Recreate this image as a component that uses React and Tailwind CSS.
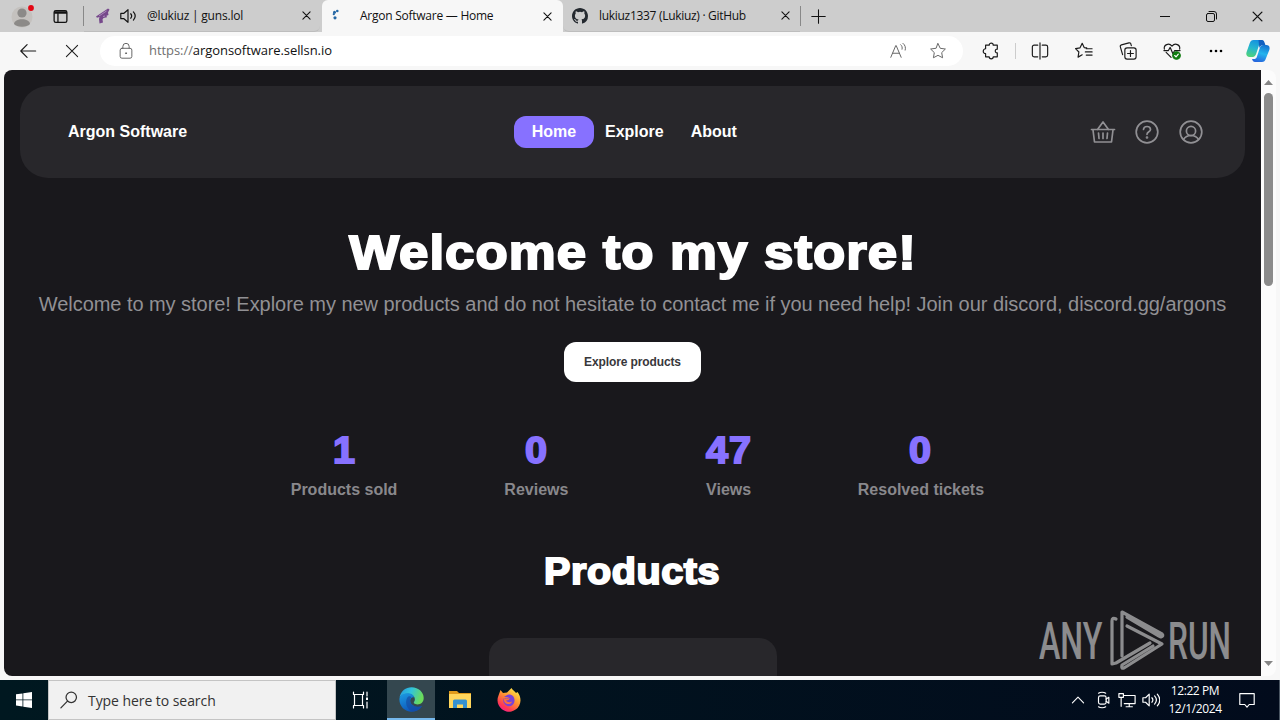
import React from 'react';

const tabs = [
  { title: '@lukiuz | guns.lol', icon: 'gun' },
  { title: 'Argon Software — Home', icon: 'argon', active: true },
  { title: 'lukiuz1337 (Lukiuz) · GitHub', icon: 'github' },
];

const stats = [
  { value: '1', label: 'Products sold' },
  { value: '0', label: 'Reviews' },
  { value: '47', label: 'Views' },
  { value: '0', label: 'Resolved tickets' },
];

function Icon({ size = 18, box = 20, sw = 1.1, className = '', children }) {
  return (
    <svg width={size} height={size} viewBox={`0 0 ${box} ${box}`} fill="none" stroke="currentColor" strokeWidth={sw} strokeLinecap="round" strokeLinejoin="round" className={`shrink-0 ${className}`}>
      {children}
    </svg>
  );
}

function Cross({ size = 9 }) {
  return <Icon size={size} box={10} sw={1.2}><path d="M1 1l8 8M9 1L1 9" /></Icon>;
}

function TabIcon({ icon }) {
  if (icon === 'gun') {
    return (
      <svg width="16" height="16" viewBox="0 0 16 16" className="shrink-0">
        <path d="M1 8.500L13 .5l1.500 1-1.500 3 .5 2.500-2 .8.500 1.500-3.500.7-1 1.500.5 3-3.500 1-.5-4.500L4.500 9 2 9.800z" fill="#76488b" />
        <path d="M4 8l7.500-5M8 8.500l2-.5" stroke="#b79cc4" strokeWidth="0.800" />
      </svg>
    );
  }
  if (icon === 'github') {
    return (
      <svg width="16" height="16" viewBox="0 0 16 16" fill="#24292f" className="shrink-0">
        <path d="M8 0C3.580 0 0 3.580 0 8c0 3.540 2.290 6.530 5.470 7.590.4.070.550-.170.550-.380 0-.190-.010-.820-.010-1.490-2.010.370-2.530-.490-2.690-.940-.090-.230-.480-.940-.820-1.130-.280-.150-.680-.520-.010-.530.630-.010 1.080.580 1.230.820.720 1.210 1.870.870 2.330.660.070-.520.280-.870.510-1.070-1.780-.2-3.640-.890-3.640-3.950 0-.870.310-1.590.820-2.150-.080-.2-.360-1.020.080-2.120 0 0 .670-.210 2.200.820a7.420 7.420 0 0 1 4 0c1.530-1.040 2.200-.820 2.200-.820.440 1.100.160 1.920.080 2.120.510.560.820 1.270.820 2.150 0 3.070-1.870 3.750-3.650 3.950.290.250.540.730.540 1.480 0 1.070-.010 1.930-.010 2.200 0 .210.150.460.550.380A8.010 8.010 0 0 0 16 8c0-4.420-3.580-8-8-8z" />
      </svg>
    );
  }
  return (
    <svg width="16" height="16" viewBox="0 0 16 16" fill="#2467a5" className="shrink-0">
      <circle cx="8.300" cy="3" r="1.300" />
      <circle cx="5.500" cy="4.300" r="1.500" />
      <circle cx="4.800" cy="6.200" r="1.100" />
      <circle cx="6" cy="9.800" r="1.600" />
    </svg>
  );
}

function Tab({ tab }) {
  if (tab.active) {
    return (
      <div className="w-[241px] h-8 flex items-center rounded-t-md bg-[#f7f7f7] pl-[7px] pr-[11px]">
        <TabIcon icon={tab.icon} />
        <span className="flex-1 pl-[15px] tracking-[-0.250px] whitespace-nowrap">{tab.title}</span>
        <Cross />
      </div>
    );
  }
  const first = tab.icon === 'gun';
  return (
    <div className={`h-8 flex items-center border-b border-[#bdbdbd] ${first ? 'w-[236px] pl-[11px] pr-[9px] rounded-br-md' : 'w-[237px] pl-[9px] pr-[10px] rounded-bl-md'}`}>
      <TabIcon icon={tab.icon} />
      {first && (
        <Icon size={18} sw={1.300} className="ml-2">
          <path d="M2 7h3.500L10 3v14l-4.500-4H2zM13 7.500c1.300 1.500 1.300 3.500 0 5M16 5.500c2.400 2.700 2.400 6.300 0 9" />
        </Icon>
      )}
      <span className={`flex-1 whitespace-nowrap ${first ? 'pl-[10px] tracking-[-0.200px]' : 'pl-[11px] tracking-[-0.300px]'}`}>{tab.title}</span>
      <Cross />
    </div>
  );
}

function TabStrip() {
  return (
    <div className="h-8 flex items-center bg-[#cdcdcd] text-[12px] text-[#111]">
      <div className="w-11 h-8 flex items-center justify-center">
        <svg width="24" height="24" viewBox="0 0 24 24">
          <circle cx="12" cy="13" r="10.500" fill="#c4c1be" />
          <circle cx="12" cy="9" r="4.600" fill="#8c8a88" />
          <path d="M4 20c0-6.500 16-6.500 16 0-3 3.500-13 3.500-16 0z" fill="#8c8a88" />
          <circle cx="21" cy="4" r="2.900" fill="#e30613" />
        </svg>
      </div>
      <div className="w-[39px] flex pl-[8px]">
        <Icon size={17} sw={1.500}>
          <rect x="2.500" y="3" width="15" height="14" rx="2" />
          <path d="M3 6h14M3 4.500h14M7 7v10" />
        </Icon>
      </div>
      <div className="w-px h-5 bg-[#888]" />
      <Tab tab={tabs[0]} />
      <div className="w-[2px]" />
      <Tab tab={tabs[1]} />
      <Tab tab={tabs[2]} />
      <div className="w-px h-5 bg-[#888]" />
      <div className="w-[35px] flex justify-center"><Icon size={15} sw={1.400}><path d="M10 1v18M1 10h18" /></Icon></div>
      <div className="flex-1" />
      <div className="w-[46px] flex justify-center"><Icon size={10} box={10} sw={1}><path d="M0 5.500h10" /></Icon></div>
      <div className="w-[46px] flex justify-center">
        <Icon size={11} box={11} sw={1}><rect x="0.500" y="2.500" width="8" height="8" rx="1.500" /><path d="M3 .5h5a2.500 2.500 0 0 1 2.500 2.500v5" /></Icon>
      </div>
      <div className="w-[46px] flex justify-center"><Cross size={11} /></div>
    </div>
  );
}

function Tool({ children }) {
  return <div className="w-11 flex justify-center">{children}</div>;
}

function Toolbar() {
  return (
    <div className="h-[38px] flex items-center bg-[#f7f7f7] text-[#1b1b1b]">
      <div className="w-[56px] flex justify-center"><Icon size={18} sw={1.300}><path d="M18.500 10H2M9 3l-7 7 7 7" /></Icon></div>
      <div className="w-[32px] flex justify-center"><Icon size={14} sw={1.500}><path d="M2 2l16 16M18 2L2 18" /></Icon></div>
      <div className="ml-3 w-[863px] h-[30px] rounded-full bg-white flex items-center pl-[17px] text-[#666]">
        <Icon size={18}>
          <rect x="3.500" y="7" width="13" height="11" rx="2" /><path d="M6.500 7V5a3.500 3.500 0 0 1 7 0v2" /><circle cx="10" cy="12.500" r=".6" fill="currentColor" />
        </Icon>
        <span className="ml-[14px] flex-1 text-[13px] tracking-[-0.060px] text-[#707070]">https://<span className="text-[#111]">argonsoftware.sellsn.io</span></span>
        <Icon size={18} className="mr-[22px]"><path d="M2 17L7.500 4h.5l5.500 13M4 12.500h7.500M13 3c1.500 1.300 2 3 1.500 5M15.500 1.500C18 3.500 18.800 6 18 9" /></Icon>
        <Icon size={18} className="mr-[16px]"><path d="M10 1.800l2.500 5.200 5.700.8-4.100 4 1 5.700L10 14.800l-5.100 2.700 1-5.700-4.100-4 5.700-.8z" /></Icon>
      </div>
      <div className="w-[6px]" />
      <Tool>
        <Icon sw={1.300}><path d="M6 3.500h2c0-3 4.500-3 4.500 0H17V8c-3-.4-3 4.400 0 4v4.500h-4.500c0 3-4.500 3-4.500 0H4V13c-3.500 0-3.500-5.500 0-5.500v-4z" /></Icon>
      </Tool>
      <div className="mx-[2px] w-px h-4 bg-[#ccc]" />
      <Tool><Icon sw={1.300}><path d="M10 1v18M7.500 3.500h-4a2 2 0 0 0-2 2v9a2 2 0 0 0 2 2h4M12.500 3.500h4a2 2 0 0 1 2 2v9a2 2 0 0 1-2 2h-4" /></Icon></Tool>
      <Tool><Icon sw={1.300}><path d="M13 6.500l-2.800-.3L8 1.500 5.600 6.500l-5 .8 3.700 3.800-.9 5.700L8 14.200M12.500 7.500H19M11.500 11H19M12.500 14.500H19" /></Icon></Tool>
      <Tool><Icon sw={1.300}><rect x="6.500" y="6.500" width="12.500" height="12.500" rx="2.500" /><path d="M12.750 9.500v6.500M9.500 12.750H16M4 14L1.500 5.500c-.4-1.300.2-2 1.200-2.300L11 1c1.200-.3 2 .2 2.300 1.500l.4 1.500" /></Icon></Tool>
      <Tool>
        <Icon sw={1.300}>
          <path d="M1.500 8C.5 3 6.500.5 10 4.500 13.500.5 19.500 3 18.500 8M3.500 11.500L9 17M1 9.500h5l2-3.500 3 7 2-3.500h6" />
          <circle cx="15" cy="15" r="4.200" fill="#107c10" stroke="#107c10" /><path d="M13 15l1.500 1.500L17 13.500" stroke="#fff" />
        </Icon>
      </Tool>
      <Tool><svg width="14" height="4" viewBox="0 0 14 4"><circle cx="2" cy="2" r="1.300" /><circle cx="7" cy="2" r="1.300" /><circle cx="12" cy="2" r="1.300" /></svg></Tool>
      <div className="w-10 flex justify-center">
        <svg width="24" height="24" viewBox="0 0 24 24">
          <defs>
            <linearGradient id="cpA" x1="0.600" y1="0" x2="0.300" y2="1"><stop offset="0" stopColor="#1490e0" /><stop offset="0.500" stopColor="#25b6cf" /><stop offset="1" stopColor="#4fd27a" /></linearGradient>
            <linearGradient id="cpB" x1="0.700" y1="0" x2="0.400" y2="1"><stop offset="0" stopColor="#1372d0" /><stop offset="0.500" stopColor="#24b5ee" /><stop offset="1" stopColor="#2667dd" /></linearGradient>
          </defs>
          <path d="M9 23h7c2 0 3-1 3.700-3l3.600-9c1-3-.4-5-3-5h-3c-2 0-3 1.500-3.500 3l-3 9c-.5 1.500-1.500 2-3 2H6c.6 1.700 1.500 3 3 3z" fill="url(#cpB)" />
          <path d="M15.500 1h-8c-2 0-3 1-3.700 3L.6 13c-1 3 .4 5 3 5h3c2 0 3-1.500 3.500-3l3-9c.5-1.500 1.500-2 3-2h2C17.700 2 17 1 15.500 1z" fill="url(#cpA)" />
          <path d="M12.500 1h3c2 0 2.600 1 3.200 3l.7 2H17c-2 0-3 1.500-3.500 3L13 6z" fill="#1160c0" />
        </svg>
      </div>
    </div>
  );
}

function SiteHeader() {
  return (
    <header className="mx-4 h-[92px] shrink-0 rounded-[28px] bg-[#28272b] flex items-center pl-12 pr-10 text-base leading-8 font-bold text-white">
      <div className="w-[446px]">Argon Software</div>
      <nav className="flex-1 flex">
        <span className="w-20 h-8 rounded-xl bg-[#8771ff] text-center">Home</span>
        <span className="ml-[11px]">Explore</span>
        <span className="ml-[27px]">About</span>
      </nav>
      <div className="flex gap-[16px] text-[#919094]">
        <Icon size={28} box={28} sw={1.700}><path d="M2.500 11.500h23M4 12l1.500 12h17L24 12M8.500 11.500L14 4l5.500 7.500M9.500 15l.5 5.500M14 15v5.500M18.500 15l-.5 5.500" /></Icon>
        <Icon size={28} box={28} sw={1.700}><circle cx="14" cy="14" r="10.800" /><path d="M10.500 11.500c.2-4 7-4 7 0 0 2.400-3.500 2.200-3.500 4.800" /><circle cx="14" cy="19.500" r=".5" fill="currentColor" /></Icon>
        <Icon size={28} box={28} sw={1.700}><circle cx="14" cy="14" r="10.800" /><circle cx="14" cy="13" r="4.600" /><path d="M6.500 21.500c1.500-2.500 4-4 7.500-4s6 1.500 7.500 4" /></Icon>
      </div>
    </header>
  );
}

function Page() {
  return (
    <main className="w-[1257px] h-[606px] pt-4 overflow-hidden rounded-l-lg bg-[#19181c] font-['Liberation_Sans',Arial,sans-serif] flex flex-col">
      <SiteHeader />
      <section className="flex flex-col items-center pt-[46px]">
        <h1 className="h-[58px] text-[48px] leading-[58px] font-bold text-white whitespace-nowrap scale-x-110 tracking-[0.900px] [-webkit-text-stroke:2px_white]">Welcome to my store!</h1>
        <p className="mt-2 h-7 text-[20px] leading-7 text-[#919094] whitespace-nowrap tracking-[-0.046px]">Welcome to my store! Explore my new products and do not hesitate to contact me if you need help! Join our discord, discord.gg/argons</p>
        <button className="mt-6 w-[137px] h-10 rounded-xl bg-white text-[12px] font-bold text-[#38373b] tracking-[-0.120px]">Explore products</button>
      </section>
      <section className="mt-[45px] flex justify-center">
        {stats.map((s) => (
          <div key={s.label} className="w-[192.300px] flex flex-col items-center">
            <div className="h-12 text-[36px] leading-[48px] font-bold text-[#8771ff] scale-x-110 tracking-[1px] [-webkit-text-stroke:1.800px_#8771ff]">{s.value}</div>
            <div className="mt-[3px] text-base font-bold text-[#89888c] whitespace-nowrap">{s.label}</div>
          </div>
        ))}
      </section>
      <h2 className="mt-[46px] h-12 text-[36px] leading-[48px] font-bold text-white text-center self-center scale-x-110 tracking-[0.500px] [-webkit-text-stroke:1.800px_white]">Products</h2>
      <div className="mt-[42px] mx-auto w-72 h-20 shrink-0 rounded-[18px] bg-[#28272b]" />
    </main>
  );
}

// scrollbar on the right edge of the page
function Scrollbar() {
  return (
    <div className="w-[15px] h-[606px] bg-[#fcfcfc] rounded-r-lg flex flex-col items-center pt-[10px] pb-[10px]">
      <svg width="9" height="5" viewBox="0 0 9 5" fill="#858585"><path d="M0 5L4.500 0 9 5z" /></svg>
      <div className="mt-2 w-[9px] h-[193px] rounded-full bg-[#8b8b8b]" />
      <div className="flex-1" />
      <svg width="9" height="5" viewBox="0 0 9 5" fill="#858585"><path d="M0 0l4.500 5L9 0z" /></svg>
    </div>
  );
}

function Watermark() {
  return (
    <div className="absolute left-[1036px] top-[608px] w-[210px] h-[68px] text-white opacity-50">
      <svg width="210" height="68" viewBox="0 0 210 68">
        <g fill="currentColor" fontFamily="Roboto, sans-serif" fontSize="51" fontWeight="500">
          <text transform="translate(3 51) scale(0.630 1)">ANY</text>
          <text transform="translate(132 51) scale(0.620 1)">RUN</text>
        </g>
        <g fill="none" stroke="currentColor" strokeWidth="3.200" strokeLinejoin="round" strokeLinecap="round">
          <path d="M80 11q-4-2-4 2v43l4-1 34-20" />
          <path d="M86 48V4l40 22q2 2-1 3l-2-1-32-19" />
          <path d="M91 18l35 18-38 24q-3 1-2-3l31-19" />
        </g>
      </svg>
    </div>
  );
}

function Taskbar() {
  return (
    <div className="h-10 flex items-center bg-linear-to-r from-[#001820] to-[#020b1c] text-white">
      <div className="w-12 flex justify-center">
        <svg width="16" height="16" viewBox="0 0 16 16" fill="white"><path d="M0 2.300l6.500-.9v6.100H0zM7.300 1.300L16 0v7.500H7.300zM0 8.300h6.500v6.200L0 13.600zM7.300 8.300H16V16l-8.700-1.300z" /></svg>
      </div>
      <div className="w-72 h-10 bg-[#f1f1f1] border border-[#c4c4c4] flex items-center pl-[11px] text-[#333]">
        <Icon size={18} sw={1.400}><circle cx="12.500" cy="7" r="5.800" /><path d="M8.300 11.300L1 18.700" /></Icon>
        <span className="ml-[10px] text-[14px] tracking-[-0.060px]">Type here to search</span>
      </div>
      <div className="w-[51px] pr-[2px] flex justify-center">
        <Icon size={18} box={18} sw={1.200}><path d="M1.500 1v2.500h10V1M1.500 17v-2.500h10V17M2.500 3.500v11M10.500 3.500v11M15 1v4M15 11v6" /><rect x="14" y="6.500" width="2" height="2.500" fill="currentColor" stroke="none" /></Icon>
      </div>
      <div className="w-12 h-10 bg-[#34474f] border-b-2 border-[#76b9ed] flex items-center justify-center">
        <svg width="25" height="25" viewBox="0 0 24 24">
          <defs>
            <linearGradient id="eA" x1="0" y1="0" x2="1" y2="0.300"><stop offset="0" stopColor="#2497df" /><stop offset="0.500" stopColor="#31c4dc" /><stop offset="1" stopColor="#6bdb5b" /></linearGradient>
            <linearGradient id="eB" x1="0" y1="0" x2="0.500" y2="1"><stop offset="0" stopColor="#1c9de4" /><stop offset="1" stopColor="#0d54b8" /></linearGradient>
          </defs>
          <path d="M0.500 10C2 3.500 6.500.3 12 .3c7 0 11.700 5 11.700 10.200 0 3.800-2.500 6.200-6 6.200-3 0-4-1.200-3.300-2.200C17 11 13.500 6.500 8.800 6.500 5 6.500 2 8 .5 10z" fill="url(#eA)" />
          <path d="M.4 12c0-4 3.600-6 7.600-6 4 0 6.500 2 6.500 4-4-1-6 6 .5 8.500 3 1.200 5.500.5 7.200-.5-2 3.500-5.500 5.700-10 5.700C5.500 23.700.4 18.500.4 12z" fill="url(#eB)" />
          <path d="M8 10c-3 5 0 12 5 13.500 4 0 7.500-2 9.200-5.500-6 2.500-12.500-1-11.500-6 .3-1.500 1-2 1-2.500C11 8.500 9 8.500 8 10z" fill="#1549a0" opacity=".65" />
        </svg>
      </div>
      <div className="w-[50px] flex justify-center">
        <svg width="22" height="20" viewBox="0 0 22 20">
          <path d="M0 1h8l2 2h12v4H0z" fill="#e09b1b" /><path d="M0 4h22v14H0z" fill="#ffd65c" />
          <path d="M4 18v-7q0-1.500 1.500-1.500h11Q18 9.500 18 11v7h-4v-3.500H8V18z" fill="#3691cf" />
        </svg>
      </div>
      <div className="w-12 flex justify-center">
        <svg width="24" height="24" viewBox="0 0 24 24">
          <defs><linearGradient id="ff" x1="0.850" y1="0" x2="0.200" y2="1"><stop offset="0" stopColor="#fff04b" /><stop offset="0.450" stopColor="#ff9332" /><stop offset="0.800" stopColor="#ff3853" /><stop offset="1" stopColor="#f5189a" /></linearGradient></defs>
          <path d="M1.500 7.500L3.500 2l2.500 3 4-.5L14.500 0c.5 2 3.500 3 4.500 5l1.500-1c2 2.500 3 5.500 3 8.500A11.500 11.500 0 1 1 1.500 7.500z" fill="url(#ff)" />
          <path d="M7 9c2-1 3-3 6-2.500 3 .5 4.500 3 4.500 5.500a5.600 5.600 0 1 1-10.500-2l3 .5 2-1z" fill="#7a42d8" />
          <path d="M7 10c3 2 4.500-.5 6 .5-1 1-2 2-4 2 1 2 4 2 6 1-1.500 4.500-9 3-8-3.500z" fill="#ff7139" />
        </svg>
      </div>
      <div className="flex-1" />
      <div className="flex items-center">
        <Icon size={14} sw={1.600} className="mr-[9px]"><path d="M2 14l8-8 8 8" /></Icon>
        <Icon size={18} sw={1.300} className="mr-[6px]"><rect x="5" y="5.500" width="8.500" height="9" rx="2" /><path d="M13.500 9l3-2v6.500l-3-2M5 2.500c2-1.500 6-1.500 8 0M5 17.500c2 1.500 6 1.500 8 0" /></Icon>
        <Icon size={18} sw={1.300} className="mr-[6px]"><path d="M6 5h13v9H7M12.500 14v3.500M9 17.500h7M1 3h5v4H1zM3.500 7v10" /></Icon>
        <Icon size={18} sw={1.300}><path d="M1 7.500h3l4-4v13l-4-4H1zM11 7.500c1.300 1.500 1.300 3.500 0 5M14 5.500c2.400 2.700 2.400 6.300 0 9M17 3.500c3.400 4 3.400 9 0 13" /></Icon>
      </div>
      <div className="ml-[5px] w-[60px] text-center text-[12px] leading-[18px] tracking-[-0.400px] whitespace-nowrap">
        <div>12:22 PM</div>
        <div>12/1/2024</div>
      </div>
      <div className="w-[54px] pl-[13px]"><Icon size={18} sw={1.300}><path d="M2 3h16v12h-5.500L10 18l-2.500-3H2z" /></Icon></div>
      <div className="w-px h-10 bg-[#4a5562]" />
    </div>
  );
}

export default function App() {
  return (
    <div className="relative w-[1280px] h-[720px] overflow-hidden bg-[#f7f7f7] font-['Open_Sans','Noto_Sans',sans-serif]">
      <TabStrip />
      <Toolbar />
      <div className="h-[610px] flex pl-1">
        <Page />
        <Scrollbar />
      </div>
      <Taskbar />
      <Watermark />
    </div>
  );
}
